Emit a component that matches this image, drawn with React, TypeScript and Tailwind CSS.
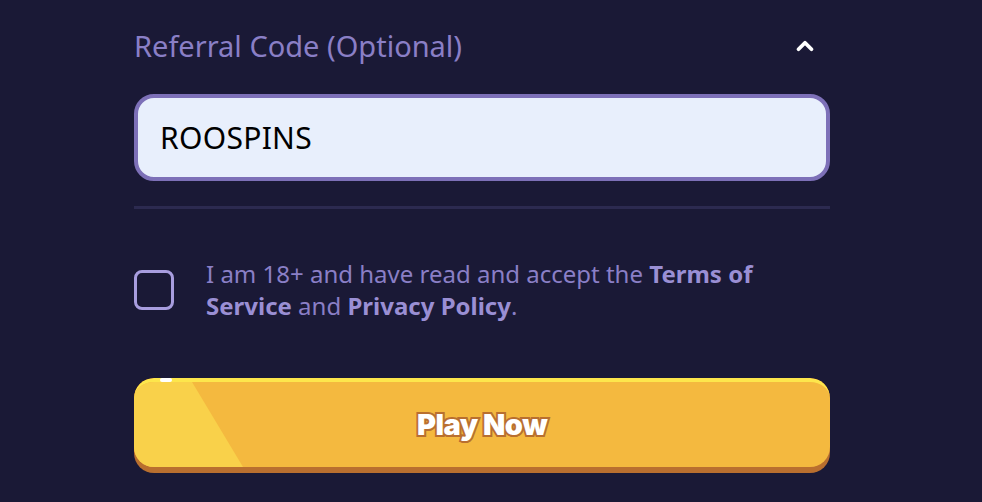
import { ChevronUp } from "lucide-react";

export default function App() {
  return (
    <div className="min-h-[502px] w-full bg-[#1a1936] font-['Noto_Sans',sans-serif]">
      <div className="ml-[134px] flex w-[696px] flex-col pt-[26px]">
        <div className="flex items-center justify-between">
          <span className="text-[29px] leading-[40px] text-[#8a7fc6]">
            Referral Code (Optional)
          </span>
          <ChevronUp className="mr-[12px] h-[26px] w-[26px] text-white" strokeWidth={3.5} />
        </div>

        <div className="mt-[28px] flex h-[87px] items-center rounded-[20px] border-4 border-[#7d70b8] bg-[#e8effc] px-[22px]">
          <span className="text-[30px] tracking-[0.3px] text-black">ROOSPINS</span>
        </div>

        <div className="mt-[25px] h-[3px] bg-[#2c2a50]" />

        <div className="mt-[53px] flex items-start gap-[32px]">
          <div className="mt-[8px] h-[40px] w-[40px] shrink-0 rounded-[8px] border-[3px] border-[#a89ddf]" />
          <p className="mt-[-4px] w-[580px] text-[24px] leading-[32px] text-[#8a7fc6]">
            I am 18+ and have read and accept the{" "}
            <span className="font-bold text-[#9a8fd4]">Terms of Service</span> and{" "}
            <span className="font-bold text-[#9a8fd4]">Privacy Policy</span>.
          </p>
        </div>

        <button className="relative mt-[56px] h-[95px] overflow-hidden rounded-[20px] bg-[#b96f2f] pb-[6px]">
          <div className="relative flex h-full items-center justify-center overflow-hidden rounded-[20px] border-t-4 border-[#fde64c] bg-[#f4b93f]">
            <svg className="absolute left-0 top-0 h-full w-[120px]" viewBox="0 0 120 90" preserveAspectRatio="none">
              <polygon points="0,0 58,0 109,90 0,90" fill="#f9d14a" />
            </svg>
            <span className="relative font-['Inter',sans-serif] text-[29px] font-black tracking-[-0.5px] text-white [-webkit-text-stroke:4px_#b96f2f] [paint-order:stroke_fill] [text-shadow:0_2px_0_#b96f2f]">
              Play Now
            </span>
          </div>
          <div className="absolute left-[26px] top-0 h-[4px] w-[12px] rounded-full bg-white" />
        </button>
      </div>
    </div>
  );
}
